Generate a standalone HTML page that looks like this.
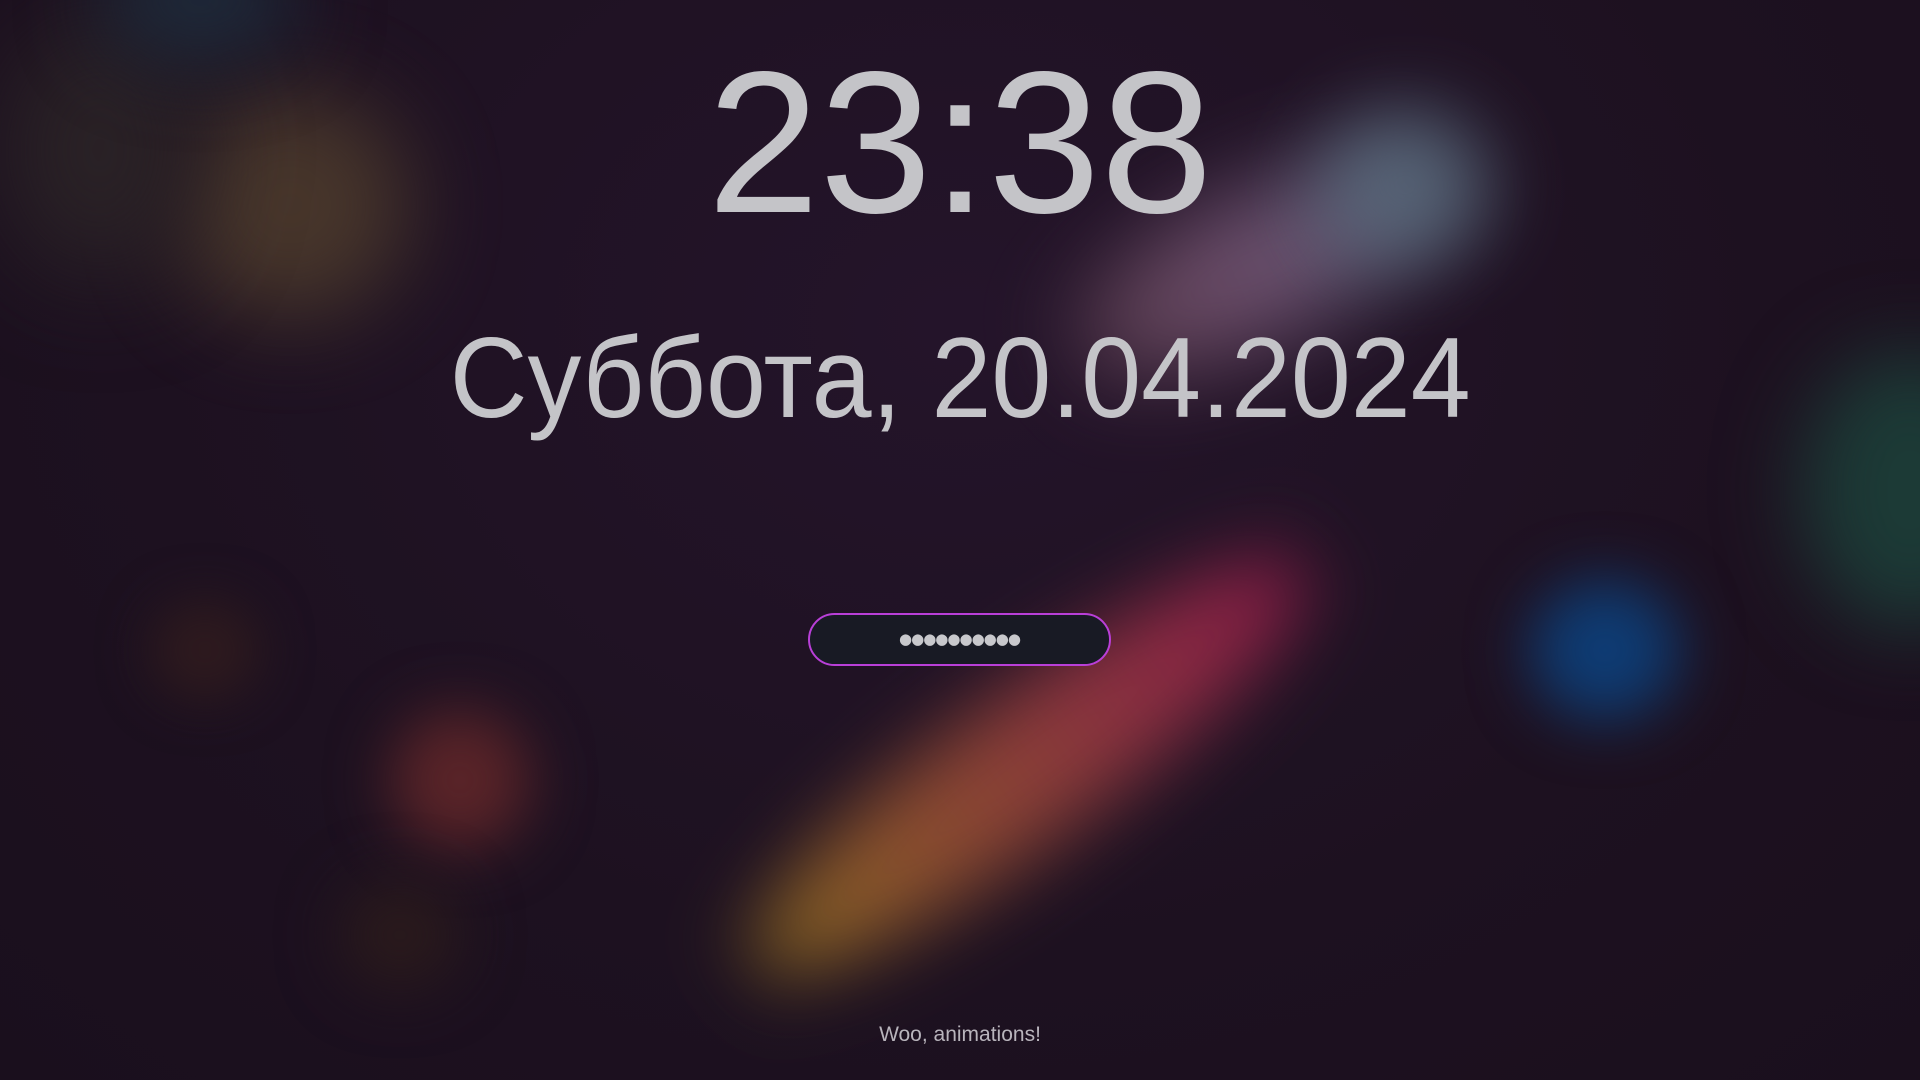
<!DOCTYPE html>
<html><head><meta charset="utf-8"><style>
html,body{margin:0;width:1920px;height:1080px;overflow:hidden;background:#1c1120;}
.bg{position:absolute;inset:0;overflow:hidden;background:radial-gradient(ellipse at 50% 30%,#24142a 0%,#1d1120 60%,#1a0f1d 100%);}
.b{position:absolute;border-radius:50%;}
.t{position:absolute;left:0;width:1920px;text-align:center;color:#c4c4c8;font-family:"Liberation Sans",sans-serif;}
</style></head><body>
<div class="bg">
 <div class="b" style="left:170px;top:90px;width:240px;height:230px;background:#4c3a2c;filter:blur(45px);opacity:.9"></div>
 <div class="b" style="left:0px;top:20px;width:200px;height:260px;background:#2a2226;filter:blur(50px)"></div>
 <div class="b" style="left:100px;top:-60px;width:200px;height:120px;background:#1e2a3a;filter:blur(40px)"></div>
 <div class="b" style="left:1060px;top:190px;width:400px;height:150px;background:linear-gradient(90deg,#6a4858,#7a5a7a,#5a6a80);filter:blur(45px);transform:rotate(-25deg);opacity:.85"></div>
 <div class="b" style="left:1320px;top:110px;width:170px;height:150px;background:#5c6e80;filter:blur(40px);opacity:.8"></div>
 <div class="b" style="left:690px;top:690px;width:680px;height:150px;background:linear-gradient(90deg,#8a6a20,#8a4a30,#8a3040,#8c1a48);filter:blur(38px);transform:rotate(-36deg);transform-origin:center;"></div>
 <div class="b" style="left:390px;top:710px;width:140px;height:140px;background:#5a2428;filter:blur(30px)"></div>
 <div class="b" style="left:1530px;top:580px;width:150px;height:140px;background:#0e3c74;filter:blur(30px)"></div>
 <div class="b" style="left:1800px;top:350px;width:220px;height:280px;background:#1c3a36;filter:blur(40px)"></div>
 <div class="b" style="left:150px;top:600px;width:110px;height:100px;background:#2e1a1e;filter:blur(25px)"></div>
 <div class="b" style="left:340px;top:880px;width:120px;height:110px;background:#2a1a1c;filter:blur(30px)"></div>
</div>
<div class="t" style="top:42px;font-size:202px;line-height:200px;">23:38</div>
<div class="t" style="top:309px;font-size:114px;line-height:140px;"><span style="display:inline-block;transform:scaleX(.945)">Суббота, 20.04.2024</span></div>
<div style="position:absolute;left:808px;top:613px;width:299px;height:49px;border:2px solid #b93fd8;border-radius:27px;background:#181a24;color:#c8c8cc;text-align:center;font:15px/49px 'DejaVu Sans',sans-serif;letter-spacing:-1px;">●●●●●●●●●●</div>
<div class="t" style="top:1021px;font-size:21px;line-height:28px;color:#b8b4bc;">Woo, animations!</div>
</body></html>
